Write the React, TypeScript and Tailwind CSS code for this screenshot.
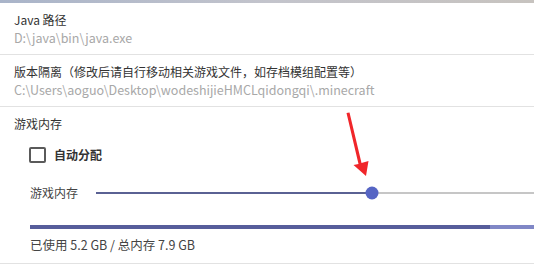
import React from 'react';

const font = { fontFamily: '"Noto Sans CJK SC", "Noto Sans", sans-serif' };

function Row({ title, path }: { title: string; path: string }) {
  return (
    <div className="border-b border-[#e2e2e2] px-[14px] pt-[8px] pb-[8px]">
      <div className="text-[12px] leading-[18px] text-[#333]">{title}</div>
      <div className="text-[12.5px] leading-[17px] text-[#a8a8a8]">{path}</div>
    </div>
  );
}

export default function App() {
  const value = 63; // slider percent
  return (
    <div className="relative h-[266px] w-[534px] overflow-hidden bg-white" style={font}>
      <div className="h-[3px] bg-gradient-to-r from-[#a9b4c9] via-[#c3c4cc] to-[#c7c3bf]" />
      <Row title="Java 路径" path="D:\java\bin\java.exe" />
      <Row
        title="版本隔离（修改后请自行移动相关游戏文件，如存档模组配置等）"
        path="C:\Users\aoguo\Desktop\wodeshijieHMCLqidongqi\.minecraft"
      />
      <div className="border-b border-[#e2e2e2] pt-[8px] pb-[10px]">
        <div className="px-[14px] text-[12px] leading-[18px] text-[#333]">游戏内存</div>
        <div className="mt-[13px] flex items-center pl-[29px]">
          <div className="h-[16px] w-[17px] rounded-[2px] border-2 border-[#5a5a5a]" />
          <span className="ml-[8px] text-[12px] font-bold leading-[18px] text-[#333]">自动分配</span>
        </div>
        <div className="mt-[20px] flex items-center pl-[30px]">
          <span className="w-[66px] shrink-0 text-[12px] leading-[18px] text-[#444]">游戏内存</span>
          <div className="relative h-[2px] flex-1 bg-[#c6c6c6]">
            <div className="h-full bg-[#5a6193]" style={{ width: `${value}%` }} />
            <div
              className="absolute top-1/2 h-[13px] w-[13px] -translate-x-1/2 -translate-y-1/2 rounded-full bg-[#5665c4]"
              style={{ left: `${value}%` }}
            />
          </div>
        </div>
        <div className="mt-[23px] ml-[30px] flex h-[4px]">
          <div className="h-full w-[460px] bg-[#575d9b]" />
          <div className="h-full flex-1 bg-[#8087c6]" />
        </div>
        <div className="mt-[7px] pl-[30px] text-[12.5px] leading-[17px] text-[#444]">
          已使用 5.2 GB / 总内存 7.9 GB
        </div>
      </div>
      <svg className="absolute left-0 top-0" width="534" height="266" viewBox="0 0 534 266">
        <polygon
          points="346.5,113 349.5,112.5 361.5,163 368.5,161 366,176 353.5,165 358.5,164"
          fill="#f0262a"
        />
      </svg>
    </div>
  );
}
